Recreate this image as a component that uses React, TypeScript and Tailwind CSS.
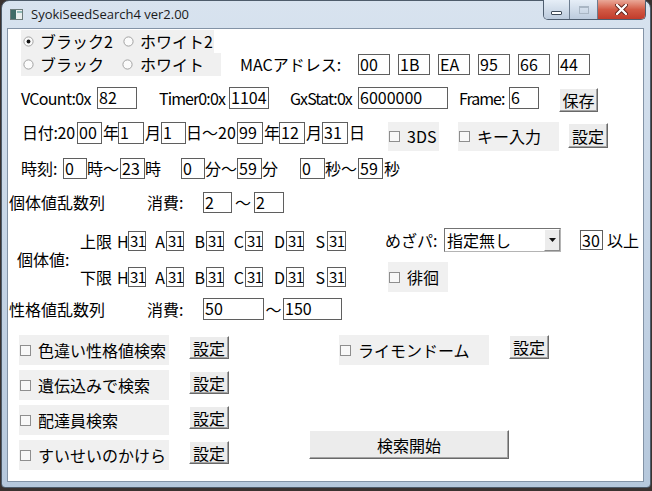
import React from 'react';

function Field({ className, value }: { className: string; value: string }) {
  return (
    <div
      className={`${className} shrink-0 whitespace-nowrap border border-[#5f5f5f] bg-white pl-[1px] leading-[18px]`}
    >
      {value}
    </div>
  );
}

function Btn({ className, children }: { className: string; children: React.ReactNode }) {
  return (
    <div
      className={`${className} flex shrink-0 items-center justify-center border border-t-white border-l-white border-r-[#696969] border-b-[#696969] bg-[#ececec] leading-none shadow-[inset_-1px_-1px_0_#a3a3a3]`}
    >
      {children}
    </div>
  );
}

function Check({ className, label }: { className: string; label: string }) {
  return (
    <div className={`${className} flex shrink-0 items-center bg-[#f0f0f0]`}>
      <span className="ml-[1px] size-[11px] shrink-0 border border-[#8e8e8e] bg-[#f8f8f8]" />
      <span className="ml-[7px] whitespace-nowrap">{label}</span>
    </div>
  );
}

function Radio({ checked }: { checked?: boolean }) {
  return (
    <svg width="11" height="11" viewBox="0 0 11 11" className="shrink-0">
      <circle cx="5.5" cy="5.5" r="4.6" fill="#fbfbfb" stroke="#a2a2a2" strokeWidth="1" />
      {checked && <circle cx="5.5" cy="5.5" r="1.9" fill="#151515" />}
    </svg>
  );
}

function IvRow({ label }: { label: string }) {
  const f = 'h-[20px] text-[15px] tracking-[-0.6px] leading-[17px]';
  return (
    <div className="flex h-[20px] items-center leading-[20px]">
      <span className="w-[37px] shrink-0">{label}</span>
      <span className="w-[11px] shrink-0">H</span>
      <Field className={`w-[18px] ${f}`} value="31" />
      <span className="w-[20px] shrink-0 pr-[1px] text-right">A</span>
      <Field className={`w-[18px] ${f}`} value="31" />
      <span className="w-[22px] shrink-0 pr-[1px] text-right">B</span>
      <Field className={`w-[18px] ${f}`} value="31" />
      <span className="w-[21px] shrink-0 pr-[1px] text-right">C</span>
      <Field className={`w-[18px] ${f}`} value="31" />
      <span className="w-[23px] shrink-0 pr-[1px] text-right">D</span>
      <Field className={`w-[18px] ${f}`} value="31" />
      <span className="w-[23px] shrink-0 pr-[2px] text-right">S</span>
      <Field className={`w-[19px] ${f}`} value="31" />
    </div>
  );
}

export default function App() {
  return (
    <div className="h-[491px] w-[652px] overflow-hidden bg-[#3a3230]">
      {/* window frame */}
      <div className="ml-[1px] h-[488px] w-[650px] rounded-t-[8px] rounded-b-[4px] border border-[#4e5c6b] bg-linear-to-b from-[#d8e3ef] via-[#c6d5e6] to-[#b6c8dc]">
        {/* title bar */}
        <div className="flex h-[27px] items-start">
          <svg width="13" height="11" viewBox="0 0 13 11" className="ml-[8px] mt-[8px] shrink-0">
            <rect x="0.5" y="0.5" width="12" height="10" fill="#e9eeee" stroke="#6c7b7b" />
            <rect x="1" y="1" width="5" height="9" fill="#3f6b67" />
            <rect x="7" y="2" width="5" height="2" fill="#8fb8b6" />
          </svg>
          <span className="ml-[8px] mt-[5px] whitespace-nowrap font-['Open_Sans',sans-serif] text-[13px] leading-[16px] text-[#1b1b1b]">
            SyokiSeedSearch4 ver2.00
          </span>
          <div className="-mt-[1px] ml-auto mr-[4px] flex h-[20px] overflow-hidden rounded-b-[5px] border border-t-0 border-[#4f5e70]">
            <div className="flex w-[26px] items-center justify-center border-r border-[#6c7c8f] bg-linear-to-b from-[#e6eef7] to-[#bccbdd]">
              <span className="mt-[6px] h-[4px] w-[11px] rounded-[1px] border border-[#3e4a58] bg-white" />
            </div>
            <div className="flex w-[28px] items-center justify-center border-r border-[#6c7c8f] bg-linear-to-b from-[#e6eef7] to-[#bccbdd]">
              <span className="h-[8px] w-[10px] border border-[#a9b6c4] border-t-2" />
            </div>
            <div className="flex w-[47px] items-center justify-center bg-linear-to-b from-[#e9a898] via-[#d25a45] to-[#c13b2b]">
              <svg width="13" height="11" viewBox="0 0 13 11">
                <path d="M2 1 L11 10 M11 1 L2 10" stroke="#5a1c14" strokeWidth="4" strokeLinecap="round" />
                <path d="M2 1 L11 10 M11 1 L2 10" stroke="#ffffff" strokeWidth="2.4" strokeLinecap="round" />
              </svg>
            </div>
          </div>
        </div>

        {/* client area */}
        <div className="ml-[5px] h-[454px] w-[637px] border border-[#8393a6] bg-white font-['Noto_Sans_CJK_JP',sans-serif] text-[16px] leading-[21px] text-black">
          {/* radios + MAC */}
          <div className="mt-[1px] flex items-start">
            <div className="ml-[13px] flex flex-col">
              <div className="flex h-[23px] w-[193px] items-center bg-[#f0f0f0]">
                <div className="flex w-[99px] items-center">
                  <span className="ml-[2px] flex"><Radio checked /></span>
                  <span className="ml-[6px]">ブラック2</span>
                </div>
                <div className="flex items-center">
                  <span className="ml-[3px] flex"><Radio /></span>
                  <span className="ml-[6px]">ホワイト2</span>
                </div>
              </div>
              <div className="flex h-[23px] w-[200px] items-center bg-[#f0f0f0]">
                <div className="flex w-[99px] items-center">
                  <span className="ml-[2px] flex"><Radio /></span>
                  <span className="ml-[6px]">ブラック</span>
                </div>
                <div className="flex items-center">
                  <span className="ml-[2px] flex"><Radio /></span>
                  <span className="ml-[7px]">ホワイト</span>
                </div>
              </div>
            </div>
            <div className="ml-[19px] mt-[23px] flex h-[23px] items-center">
              <span className="w-[118px] shrink-0">MACアドレス:</span>
              <div className="flex gap-[8px]">
                {['00', '1B', 'EA', '95', '66', '44'].map((v) => (
                  <Field key={v} className="h-[21px] w-[32px]" value={v} />
                ))}
              </div>
            </div>
          </div>

          {/* VCount row */}
          <div className="mt-[11px] flex h-[25px] items-start">
            <span className="ml-[13px] w-[76px] shrink-0 tracking-[-0.7px] leading-[22px]">VCount:0x</span>
            <Field className="h-[22px] w-[40px]" value="82" />
            <span className="ml-[22px] w-[70px] shrink-0 tracking-[-0.9px] leading-[22px]">Timer0:0x</span>
            <Field className="h-[22px] w-[40px]" value="1104" />
            <span className="ml-[21px] w-[68px] shrink-0 tracking-[-0.9px] leading-[22px]">GxStat:0x</span>
            <Field className="h-[22px] w-[90px]" value="6000000" />
            <span className="ml-[11px] w-[50px] shrink-0 tracking-[-1px] leading-[22px]">Frame:</span>
            <Field className="h-[22px] w-[30px]" value="6" />
            <Btn className="ml-[20px] mt-[1px] h-[24px] w-[39px]">保存</Btn>
          </div>

          {/* date row */}
          <div className="mt-[10px] flex h-[29px] items-start">
            <span className="ml-[14px] w-[55px] shrink-0 tracking-[-0.3px]">日付:20</span>
            <Field className="h-[22px] w-[25px]" value="00" />
            <span className="w-[16px] shrink-0 pl-[1px]">年</span>
            <Field className="h-[22px] w-[26px]" value="1" />
            <span className="w-[17px] shrink-0 pl-[1px]">月</span>
            <Field className="h-[22px] w-[25px]" value="1" />
            <span className="w-[51px] shrink-0 whitespace-nowrap">日～20</span>
            <Field className="h-[22px] w-[26px]" value="99" />
            <span className="w-[16px] shrink-0 pl-[1px]">年</span>
            <Field className="h-[22px] w-[26px]" value="12" />
            <span className="w-[17px] shrink-0 pl-[1px]">月</span>
            <Field className="h-[22px] w-[26px]" value="31" />
            <span className="w-[16px] shrink-0 pl-[1px]">日</span>
            <Check className="ml-[24px] h-[29px] w-[51px]" label="3DS" />
            <Check className="ml-[19px] h-[29px] w-[101px]" label="キー入力" />
            <Btn className="ml-[9px] mt-[1px] h-[25px] w-[40px]">設定</Btn>
          </div>

          {/* time row */}
          <div className="mt-[7px] flex h-[21px] items-start">
            <span className="ml-[13px] w-[42px] shrink-0">時刻:</span>
            <Field className="h-[21px] w-[24px]" value="0" />
            <span className="w-[33px] shrink-0 whitespace-nowrap">時～</span>
            <Field className="h-[21px] w-[25px]" value="23" />
            <span className="w-[36px] shrink-0">時</span>
            <Field className="h-[21px] w-[24px]" value="0" />
            <span className="w-[32px] shrink-0 whitespace-nowrap">分～</span>
            <Field className="h-[21px] w-[25px]" value="59" />
            <span className="w-[38px] shrink-0">分</span>
            <Field className="h-[21px] w-[25px]" value="0" />
            <span className="w-[33px] shrink-0 whitespace-nowrap">秒～</span>
            <Field className="h-[21px] w-[25px]" value="59" />
            <span className="shrink-0 pl-[1px]">秒</span>
          </div>

          {/* IV rng */}
          <div className="mt-[13px] flex h-[21px] items-start">
            <span className="ml-[1px] w-[138px] shrink-0">個体値乱数列</span>
            <span className="w-[56px] shrink-0">消費:</span>
            <Field className="h-[21px] w-[29px]" value="2" />
            <span className="w-[22px] shrink-0 text-center">～</span>
            <Field className="h-[21px] w-[30px]" value="2" />
          </div>

          {/* IV block + mezapa */}
          <div className="mt-[15px] flex items-start">
            <div className="ml-[9px] mt-[3px] flex h-[56px] items-center">
              <span className="w-[63px] shrink-0">個体値:</span>
              <div className="flex flex-col gap-[16px]">
                <IvRow label="上限" />
                <IvRow label="下限" />
              </div>
            </div>
            <div className="ml-[39px] flex flex-col">
              <div className="flex h-[24px] items-center">
                <span className="w-[59px] shrink-0 whitespace-nowrap">めざパ:</span>
                <div className="flex h-[24px] w-[117px] shrink-0 border border-[#b4b4b4] border-t-[#737373] border-l-[#737373] bg-white">
                  <span className="flex-1 pl-[2px] leading-[22px]">指定無し</span>
                  <div className="flex w-[16px] items-center justify-center border border-t-white border-l-white border-r-[#8a8a8a] border-b-[#8a8a8a] bg-[#ececec]">
                    <svg width="7" height="4" viewBox="0 0 7 4">
                      <path d="M0 0 H7 L3.5 4 Z" fill="#111" />
                    </svg>
                  </div>
                </div>
                <Field className="ml-[19px] h-[20px] w-[23px] leading-[17px]" value="30" />
                <span className="ml-[4px] whitespace-nowrap">以上</span>
              </div>
              <Check className="ml-[3px] mt-[10px] h-[30px] w-[60px]" label="徘徊" />
            </div>
          </div>

          {/* nature rng */}
          <div className="mt-[6px] flex h-[22px] items-start">
            <span className="ml-[1px] w-[138px] shrink-0 leading-[22px]">性格値乱数列</span>
            <span className="w-[56px] shrink-0 leading-[22px]">消費:</span>
            <Field className="h-[22px] w-[61px]" value="50" />
            <span className="w-[19px] shrink-0 text-center leading-[22px]">～</span>
            <Field className="h-[22px] w-[59px]" value="150" />
          </div>

          {/* options */}
          <div className="mt-[15px] flex items-start">
            <div className="ml-[11px] flex flex-col gap-[5px]">
              {['色違い性格値検索', '遺伝込みで検索', '配達員検索', 'すいせいのかけら'].map((t) => (
                <div key={t} className="flex h-[30px] items-start">
                  <Check className="h-[30px] w-[150px]" label={t} />
                  <Btn className="ml-[20px] mt-[1px] h-[23px] w-[40px]">設定</Btn>
                </div>
              ))}
            </div>
            <div className="ml-[80px] flex flex-col">
              <div className="flex items-start">
                <Check className="ml-[30px] h-[30px] w-[150px]" label="ライモンドーム" />
                <Btn className="ml-[20px] h-[24px] w-[40px]">設定</Btn>
              </div>
              <Btn className="mt-[65px] h-[29px] w-[200px]">検索開始</Btn>
            </div>
          </div>
        </div>
      </div>
    </div>
  );
}
